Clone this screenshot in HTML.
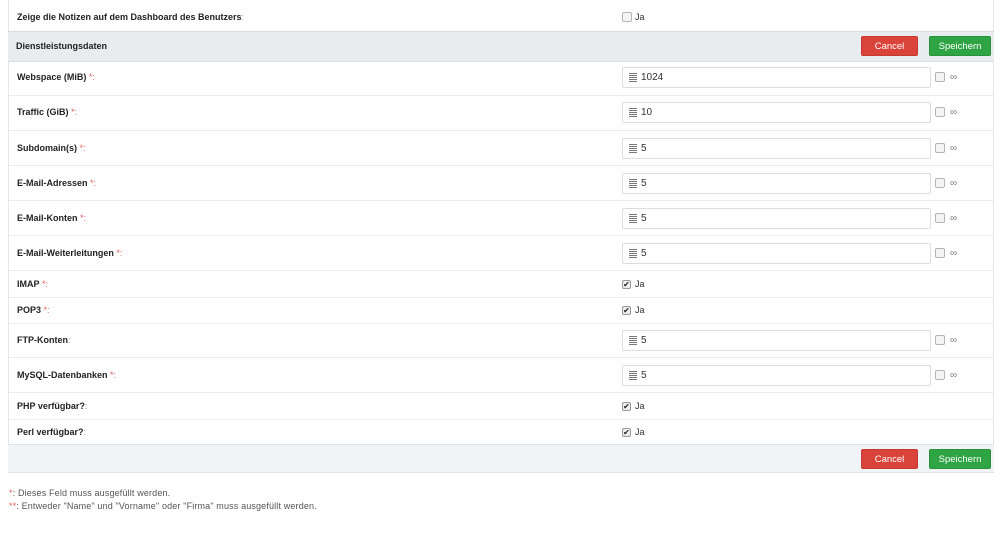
<!DOCTYPE html>
<html><head><meta charset="utf-8"><style>
*{box-sizing:border-box;margin:0;padding:0}
body{width:1000px;height:534px;background:#fff;font-family:"Liberation Sans",sans-serif;font-size:9px;color:#222;position:relative;overflow:hidden}
.a{position:absolute}
.lbl{position:absolute;left:17px;font-weight:bold;font-size:9px;color:#222}
.lbl i{font-style:normal;color:#e06060;font-weight:normal}
.line{position:absolute;left:9px;width:984px;height:1px;background:#ececec}
.inp{position:absolute;left:622px;width:309px;height:21px;border:1px solid #ddd;border-radius:2px;background:#fff;font-size:10px;line-height:19px;color:#333;padding:0 0 0 18px}
.inp:before{content:"";position:absolute;left:6px;top:5px;width:8px;height:9px;background:repeating-linear-gradient(#777 0 1px,transparent 1px 2px)}
.cb{position:absolute;width:10px;height:10px;border:1px solid #b5b5b5;border-radius:2px;background:#f4f4f4}
.inf{position:absolute;left:950px;font-size:10px;color:#777}
.chk{position:absolute;left:622px;width:9px;height:9px;border:1px solid #999;border-radius:2px;background:#eee;font-size:8px;line-height:7px;text-align:center;color:#222}
.ja{position:absolute;left:635px;font-size:9px;color:#333}
.btn{position:absolute;height:20px;border-radius:2px;color:#fff;font-size:9.5px;text-align:center;line-height:20px}
.c{left:861px;width:57px;background:#d9433a;border:1px solid #c23a32}
.s{left:929px;width:62px;background:#2fa444;border:1px solid #28923b}
.note{position:absolute;left:9px;font-size:9px;color:#555;letter-spacing:0.15px}
</style></head><body>
<div class="a" style="left:8px;top:0;width:1px;height:473px;background:#e4e6e8"></div>
<div class="a" style="left:993px;top:0;width:1px;height:473px;background:#e4e6e8"></div>
<div class="lbl" style="top:12px">Zeige die Notizen auf dem Dashboard des Benutzers<i style="color:#999">:</i></div>
<div class="cb" style="left:622px;top:12px"></div><div class="ja" style="top:12px">Ja</div>
<div class="a" style="left:8px;top:31px;width:986px;height:31px;background:#e9ecef;border-top:1px solid #d8dbde;border-bottom:1px solid #dde0e3"></div>
<div class="lbl" style="left:16px;top:41px">Dienstleistungsdaten</div>
<div class="btn c" style="top:36px">Cancel</div><div class="btn s" style="top:36px">Speichern</div>

<div class="lbl" style="top:72px">Webspace (MiB) <i>*:</i></div>
<div class="inp" style="top:67px">1024</div><div class="cb" style="left:935px;top:72px"></div><div class="inf" style="top:72px">∞</div>
<div class="line" style="top:95px"></div>
<div class="lbl" style="top:107px">Traffic (GiB) <i>*:</i></div>
<div class="inp" style="top:102px">10</div><div class="cb" style="left:935px;top:107px"></div><div class="inf" style="top:107px">∞</div>
<div class="line" style="top:130px"></div>
<div class="lbl" style="top:143px">Subdomain(s) <i>*:</i></div>
<div class="inp" style="top:138px">5</div><div class="cb" style="left:935px;top:143px"></div><div class="inf" style="top:143px">∞</div>
<div class="line" style="top:165px"></div>
<div class="lbl" style="top:178px">E-Mail-Adressen <i>*:</i></div>
<div class="inp" style="top:173px">5</div><div class="cb" style="left:935px;top:178px"></div><div class="inf" style="top:178px">∞</div>
<div class="line" style="top:200px"></div>
<div class="lbl" style="top:213px">E-Mail-Konten <i>*:</i></div>
<div class="inp" style="top:208px">5</div><div class="cb" style="left:935px;top:213px"></div><div class="inf" style="top:213px">∞</div>
<div class="line" style="top:235px"></div>
<div class="lbl" style="top:248px">E-Mail-Weiterleitungen <i>*:</i></div>
<div class="inp" style="top:243px">5</div><div class="cb" style="left:935px;top:248px"></div><div class="inf" style="top:248px">∞</div>
<div class="line" style="top:270px"></div>
<div class="lbl" style="top:279px">IMAP <i>*:</i></div>
<div class="chk" style="top:280px">✔</div><div class="ja" style="top:279px">Ja</div>
<div class="line" style="top:297px"></div>
<div class="lbl" style="top:305px">POP3 <i>*:</i></div>
<div class="chk" style="top:306px">✔</div><div class="ja" style="top:305px">Ja</div>
<div class="line" style="top:323px"></div>
<div class="lbl" style="top:335px">FTP-Konten<i style="color:#999">:</i></div>
<div class="inp" style="top:330px">5</div><div class="cb" style="left:935px;top:335px"></div><div class="inf" style="top:335px">∞</div>
<div class="line" style="top:357px"></div>
<div class="lbl" style="top:370px">MySQL-Datenbanken <i>*:</i></div>
<div class="inp" style="top:365px">5</div><div class="cb" style="left:935px;top:370px"></div><div class="inf" style="top:370px">∞</div>
<div class="line" style="top:392px"></div>
<div class="lbl" style="top:401px">PHP verfügbar?<i style="color:#999">:</i></div>
<div class="chk" style="top:402px">✔</div><div class="ja" style="top:401px">Ja</div>
<div class="line" style="top:419px"></div>
<div class="lbl" style="top:427px">Perl verfügbar?<i style="color:#999">:</i></div>
<div class="chk" style="top:428px">✔</div><div class="ja" style="top:427px">Ja</div>

<div class="a" style="left:8px;top:444px;width:986px;height:29px;background:#f1f4f7;border-top:1px solid #dfe2e5;border-bottom:1px solid #dfe2e5"></div>
<div class="btn c" style="top:449px">Cancel</div><div class="btn s" style="top:449px">Speichern</div>

<div class="note" style="top:488px"><span style="color:#e06060">*</span>: Dieses Feld muss ausgefüllt werden.</div>
<div class="note" style="top:501px"><span style="color:#e06060">**</span>: Entweder "Name" und "Vorname" oder "Firma" muss ausgefüllt werden.</div>
</body></html>
